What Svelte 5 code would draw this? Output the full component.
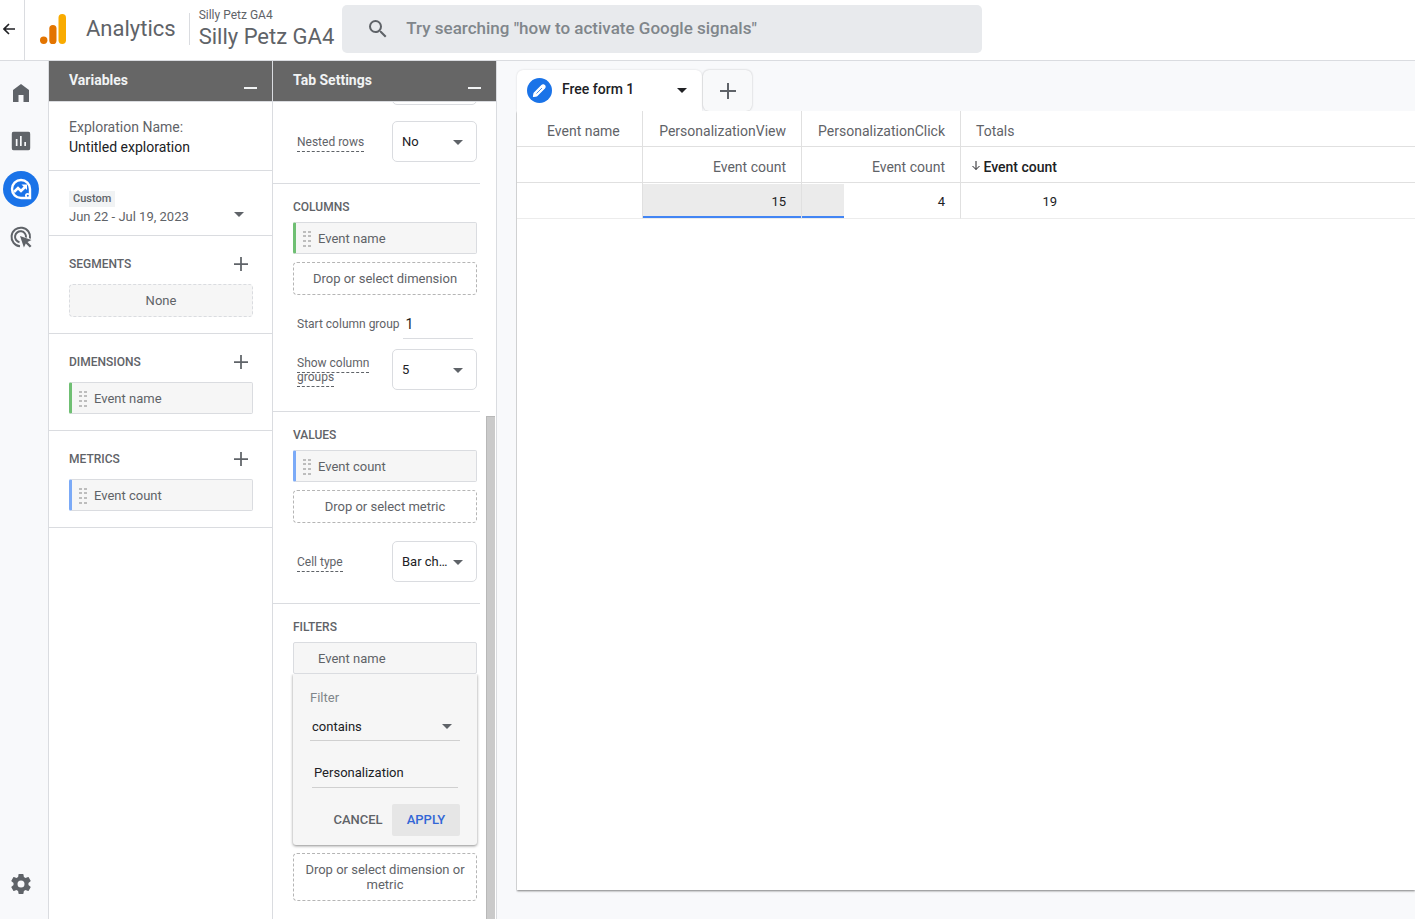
<script>
    let groupStart = $state("1");
    let filterText = $state("Personalization");

    const sections = [
        { title: "Dimensions", item: "Event name", kind: "dimension" },
        { title: "Metrics", item: "Event count", kind: "metric" },
    ];

    const columns = [
        { name: "PersonalizationView", count: 15 },
        { name: "PersonalizationClick", count: 4 },
    ];
    const max = Math.max(...columns.map((c) => c.count));
    const total = columns.reduce((sum, c) => sum + c.count, 0);
</script>

{#snippet caret()}
    <svg class="caret" viewBox="0 0 10 5" aria-hidden="true">
        <path d="M0 0h10L5 5z" />
    </svg>
{/snippet}

{#snippet plus(size)}
    <svg width={size} height={size} viewBox="0 0 16 16" aria-hidden="true">
        <path d="M8 0v16M0 8h16" fill="none" stroke="currentColor" stroke-width="2" />
    </svg>
{/snippet}

{#snippet chip(label, kind)}
    <div class="chip {kind}">
        <svg class="grip" viewBox="0 0 8 16" aria-hidden="true">
            {#each [0, 4, 9, 14] as y}
                <rect x="0" {y} width="3" height="2" />
                <rect x="5" {y} width="3" height="2" />
            {/each}
        </svg>
        <span>{label}</span>
    </div>
{/snippet}

<div class="app">
    <header class="topbar">
        <button class="back" aria-label="Back">
            <svg width="12" height="12" viewBox="0 0 12 12" aria-hidden="true">
                <path d="M12 6H1M6 1L1 6l5 5" fill="none" stroke="currentColor" stroke-width="1.6" />
            </svg>
        </button>
        <a class="brand" href="#home">
            <svg width="26" height="30" viewBox="0 0 26 30" aria-hidden="true">
                <rect x="18.5" y="0" width="7.5" height="30" rx="3.7" fill="#f9ab00" />
                <rect x="9.3" y="11" width="7.2" height="19" rx="3.6" fill="#e37400" />
                <circle cx="3.7" cy="26.3" r="3.7" fill="#e37400" />
            </svg>
            <span>Analytics</span>
        </a>
        <div class="property">
            <span class="account">Silly Petz GA4</span>
            <span class="name">Silly Petz GA4</span>
        </div>
        <label class="search">
            <svg width="18" height="18" viewBox="3 3 18 18" aria-hidden="true">
                <path
                    d="M15.5 14h-.79l-.28-.27A6.471 6.471 0 0 0 16 9.5 6.5 6.5 0 1 0 9.5 16c1.61 0 3.09-.59 4.23-1.57l.27.28v.79l5 4.99L20.49 19l-4.99-5zm-6 0C7.01 14 5 11.99 5 9.5S7.01 5 9.5 5 14 7.01 14 9.5 11.99 14 9.5 14z"
                />
            </svg>
            <input
                type="search"
                aria-label="Search"
                placeholder={'Try searching "how to activate Google signals"'}
            />
        </label>
    </header>

    <div class="body">
        <nav class="rail">
            <a href="#home" aria-label="Home">
                <svg width="16" height="18" viewBox="0 0 16 18" aria-hidden="true">
                    <path d="M8 0L0 6v12h5.5v-7h5v7H16V6z" />
                </svg>
            </a>
            <a href="#reports" aria-label="Reports">
                <svg width="24" height="24" viewBox="0 0 24 24" aria-hidden="true">
                    <path
                        d="M19 2.8H5A2 2 0 0 0 2.8 5v14A2 2 0 0 0 5 21.2h14a2 2 0 0 0 2.2-2.2V5A2 2 0 0 0 19 2.8zM8.5 17h-1.7v-7h1.7zm4.2 0h-1.7V7h1.7zm4.3 0h-1.7v-4H17z"
                    />
                </svg>
            </a>
            <a href="#explore" class="active" aria-label="Explore">
                <svg width="22" height="22" viewBox="0 0 22 22" aria-hidden="true">
                    <path
                        d="M11 2a9 9 0 1 0 0 18h9v-9a9 9 0 0 0-9-9z"
                        fill="none"
                        stroke="currentColor"
                        stroke-width="2.4"
                    />
                    <path d="M4 14l4-4 3 3 5-5" fill="none" stroke="currentColor" stroke-width="2.6" />
                    <path d="M11.5 6.5H17V12z" />
                    <circle cx="17.5" cy="17.5" r="2.5" />
                    <circle cx="17.8" cy="17.8" r="1" fill="#1a73e8" />
                </svg>
            </a>
            <a href="#advertising" aria-label="Advertising">
                <svg width="22" height="22" viewBox="0 0 22 22" aria-hidden="true">
                    <g fill="none" stroke="currentColor" stroke-width="2">
                        <path d="M20 12.5A9.3 9.3 0 1 0 10 20.2" />
                        <path d="M16 11.5A5.5 5.5 0 1 0 9.5 16.2" />
                    </g>
                    <path d="M10 10l11.5 4-4 1.9 4 4-1.7 1.7-4-4-1.9 3.9z" />
                </svg>
            </a>
            <a href="#admin" class="admin" aria-label="Admin">
                <svg width="24" height="24" viewBox="0 0 24 24" aria-hidden="true">
                    <path
                        d="M19.43 12.98c.04-.32.07-.64.07-.98s-.03-.66-.07-.98l2.11-1.65c.19-.15.24-.42.12-.64l-2-3.46c-.12-.22-.39-.3-.61-.22l-2.49 1c-.52-.4-1.08-.73-1.69-.98l-.38-2.65A.488.488 0 0 0 14 2h-4c-.25 0-.46.18-.49.42l-.38 2.65c-.61.25-1.17.59-1.69.98l-2.49-1c-.23-.09-.49 0-.61.22l-2 3.46c-.13.22-.07.49.12.64l2.11 1.65c-.04.32-.07.65-.07.98s.03.66.07.98l-2.11 1.65c-.19.15-.24.42-.12.64l2 3.46c.12.22.39.3.61.22l2.49-1c.52.4 1.08.73 1.69.98l.38 2.65c.03.24.24.42.49.42h4c.25 0 .46-.18.49-.42l.38-2.65c.61-.25 1.17-.59 1.69-.98l2.49 1c.23.09.49 0 .61-.22l2-3.46c.12-.22.07-.49-.12-.64zM12 15.5a3.5 3.5 0 1 1 0-7 3.5 3.5 0 0 1 0 7z"
                    />
                </svg>
            </a>
        </nav>

        <!-- Variables -->
        <section class="panel">
            <div class="panel-head">
                <h2>Variables</h2>
                <button class="minimize" aria-label="Minimize variables"></button>
            </div>
            <div class="block exploration">
                <div class="muted">Exploration Name:</div>
                <div>Untitled exploration</div>
            </div>
            <button class="block dates">
                <span class="range">
                    <span class="badge">Custom</span>
                    <span>Jun 22 - Jul 19, 2023</span>
                </span>
                {@render caret()}
            </button>
            <div class="block group">
                <div class="group-head">
                    <h3>Segments</h3>
                    <button aria-label="Add segment">{@render plus(14)}</button>
                </div>
                <div class="drop empty">None</div>
            </div>
            {#each sections as s}
                <div class="block group">
                    <div class="group-head">
                        <h3>{s.title}</h3>
                        <button aria-label="Add {s.title}">{@render plus(14)}</button>
                    </div>
                    {@render chip(s.item, s.kind)}
                </div>
            {/each}
        </section>

        <!-- Tab settings -->
        <section class="panel">
            <div class="panel-head">
                <h2>Tab Settings</h2>
                <button class="minimize" aria-label="Minimize tab settings"></button>
            </div>
            <div class="scroller">
                <div class="settings">
                    <div class="setting-group scrolled">
                        <div class="field">
                            <span></span>
                            <div class="select">
                                <select aria-label="Show rows"><option>10</option></select>
                                {@render caret()}
                            </div>
                        </div>
                        <div class="field nested">
                            <label for="nested"><span class="hint">Nested rows</span></label>
                            <div class="select">
                                <select id="nested"><option>No</option><option>Yes</option></select>
                                {@render caret()}
                            </div>
                        </div>
                    </div>

                    <div class="setting-group">
                        <h3>Columns</h3>
                        {@render chip("Event name", "dimension")}
                        <button class="drop">Drop or select dimension</button>
                        <div class="field start">
                            <label for="start">Start column group</label>
                            <input id="start" type="text" bind:value={groupStart} />
                        </div>
                        <div class="field">
                            <label for="groups"><span class="hint">Show column groups</span></label>
                            <div class="select">
                                <select id="groups"><option>5</option><option>10</option></select>
                                {@render caret()}
                            </div>
                        </div>
                    </div>

                    <div class="setting-group">
                        <h3>Values</h3>
                        {@render chip("Event count", "metric")}
                        <button class="drop">Drop or select metric</button>
                        <div class="field cell-type">
                            <label for="cell"><span class="hint">Cell type</span></label>
                            <div class="select">
                                <select id="cell"><option>Bar chart</option><option>Plain text</option></select>
                                {@render caret()}
                            </div>
                        </div>
                    </div>

                    <div class="setting-group">
                        <h3>Filters</h3>
                        <div class="chip plain"><span>Event name</span></div>
                        <form class="filter" onsubmit={(e) => e.preventDefault()}>
                            <label class="filter-label" for="match">Filter</label>
                            <div class="match">
                                <select id="match"><option>contains</option><option>exactly matches</option></select>
                                {@render caret()}
                            </div>
                            <input type="text" aria-label="Expression" bind:value={filterText} />
                            <div class="actions">
                                <button type="button">Cancel</button>
                                <button type="submit" class="apply">Apply</button>
                            </div>
                        </form>
                        <button class="drop">Drop or select dimension or metric</button>
                    </div>
                </div>
                <div class="track"><div class="thumb"></div></div>
            </div>
        </section>

        <main>
            <div class="tabs">
                <button class="tab">
                    <span class="pencil">
                        <svg width="15" height="15" viewBox="0 0 15 15" aria-hidden="true">
                            <path
                                d="M1.5 13.5l.6-3.3 7.7-7.7a1.9 1.9 0 0 1 2.7 2.7l-7.7 7.7z"
                                fill="#fff"
                                stroke="#fff"
                                stroke-width="1.2"
                                stroke-linejoin="round"
                            />
                            <path d="M4.5 10.5l5.500-5.500" stroke="#1a73e8" stroke-width="0.8" />
                        </svg>
                    </span>
                    <span class="tab-name">Free form 1</span>
                    {@render caret()}
                </button>
                <button class="tab add" aria-label="Add tab">{@render plus(16)}</button>
            </div>
            <div class="canvas">
                <table>
                    <colgroup>
                        <col class="c-name" />
                        {#each columns as c}<col class="c-value" />{/each}
                        <col class="c-total" />
                        <col />
                    </colgroup>
                    <thead>
                        <tr>
                            <th class="first">Event name</th>
                            {#each columns as c}<th class="num">{c.name}</th>{/each}
                            <th class="totals">Totals</th>
                            <th></th>
                        </tr>
                        <tr>
                            <th></th>
                            {#each columns as c}<th class="num">Event count</th>{/each}
                            <th class="num sorted">
                                <svg width="8" height="10" viewBox="0 0 8 10" aria-hidden="true">
                                    <path d="M4 0v8.5M.5 5L4 8.5 7.5 5" fill="none" stroke="currentColor" />
                                </svg>
                                Event count
                            </th>
                            <th></th>
                        </tr>
                    </thead>
                    <tbody>
                        <tr>
                            <td></td>
                            {#each columns as c}
                                <td class="num bar-cell">
                                    <div class="bar" style:width="{(c.count / max) * 100}%"></div>
                                    <span>{c.count}</span>
                                </td>
                            {/each}
                            <td class="num">{total}</td>
                            <td></td>
                        </tr>
                    </tbody>
                </table>
            </div>
        </main>
    </div>
</div>

<style>
    :global(body) {
        background: #f8f9fa;
    }

    .app {
        display: flex;
        flex-direction: column;
        height: 100vh;
        overflow: hidden;
        font-family: Roboto, "Liberation Sans", sans-serif;
        font-size: 13px;
        line-height: 20px;
        color: #202124;
    }
    .app *,
    .app *::after {
        box-sizing: border-box;
    }
    button,
    input,
    select {
        font: inherit;
        color: inherit;
        background: none;
        border: 0;
        border-radius: 0;
        padding: 0;
        margin: 0;
        outline: 0;
    }
    select {
        appearance: none;
    }
    button {
        cursor: pointer;
    }
    h2,
    h3 {
        margin: 0;
    }
    svg {
        display: block;
        flex: none;
        fill: currentColor;
    }
    .caret {
        width: 10px;
        height: 5px;
    }

    /* Top bar */
    .topbar {
        display: flex;
        align-items: center;
        flex: none;
        height: 61px;
        background: #fff;
        border-bottom: 1px solid #dadce0;
        color: #5f6368;
    }
    .back {
        display: flex;
        align-items: center;
        width: 25px;
        height: 60px;
        padding: 0 0 2px 3px;
        border-right: 1px solid #dadce0;
        color: #202124;
    }
    .brand {
        display: flex;
        align-items: center;
        gap: 20px;
        padding: 0 13px 2px 15px;
        font-size: 22px;
        color: #5f6368;
        text-decoration: none;
    }
    .property {
        display: flex;
        flex-direction: column;
        padding: 0 0 2px 10px;
        position: relative;
    }
    .property::after {
        content: "";
        position: absolute;
        left: 0;
        top: 6px;
        height: 32px;
        border-left: 1px solid #dadce0;
    }
    .account {
        font-size: 12px;
        line-height: 16px;
    }
    .name {
        font-size: 22px;
        line-height: 28px;
        white-space: nowrap;
    }
    .search {
        display: flex;
        align-items: center;
        gap: 19px;
        flex: 0 1 640px;
        height: 48px;
        margin: 0 0 2px 8px;
        padding: 0 27px;
        border-radius: 5px;
        background: #e8eaed;
    }
    .search input {
        flex: 1;
        min-width: 0;
        padding-bottom: 2px;
        font-size: 17px;
        font-weight: 500;
        appearance: none;
    }
    .search input::placeholder {
        color: #80868b;
        opacity: 1;
    }

    .body {
        display: flex;
        flex: 1;
        min-height: 0;
    }

    /* Left rail */
    .rail {
        display: flex;
        flex-direction: column;
        gap: 12px;
        flex: none;
        width: 49px;
        padding: 14px 0 17px 3px;
        background: #f8f9fb;
        border-right: 1px solid #dadce0;
        color: #5f6368;
    }
    .rail a {
        display: grid;
        place-items: center;
        width: 36px;
        height: 36px;
        border-radius: 50%;
        color: inherit;
    }
    .rail .active {
        background: #1a73e8;
        color: #fff;
    }
    .rail .admin {
        margin-top: auto;
    }

    /* Panels */
    .panel {
        display: flex;
        flex-direction: column;
        flex: none;
        width: 224px;
        background: #fff;
        border-right: 1px solid #dadce0;
    }
    .panel-head {
        display: flex;
        justify-content: space-between;
        flex: none;
        height: 41px;
        padding: 9px 15px 0 20px;
        background: #666;
        border-bottom: 1px solid #dadce0;
        color: #f1f3f4;
    }
    .panel-head h2 {
        font-size: 14px;
        font-weight: 700;
    }
    .minimize {
        width: 13px;
        height: 19px;
        border-bottom: 2px solid #f1f3f4;
    }
    .block {
        padding: 15px 19px 13px 20px;
        border-bottom: 1px solid #dadce0;
    }
    .exploration {
        font-size: 14px;
    }
    .muted {
        color: #5f6368;
    }
    .dates {
        display: flex;
        justify-content: space-between;
        align-items: flex-end;
        padding: 20px 28px 8px 20px;
        text-align: left;
        color: #5f6368;
    }
    .dates .caret {
        margin-bottom: 10px;
    }
    .range {
        display: flex;
        flex-direction: column;
        align-items: flex-start;
    }
    .badge {
        padding: 0 4px;
        background: #f1f3f4;
        font-size: 11px;
        font-weight: 500;
        line-height: 16px;
    }
    .group {
        padding: 18px 19px 16px 20px;
        color: #5f6368;
    }
    .group-head {
        display: flex;
        justify-content: space-between;
        height: 30px;
    }
    h3 {
        font-size: 12px;
        font-weight: 500;
        text-transform: uppercase;
    }
    .group-head button {
        display: grid;
        place-items: center;
        width: 24px;
        height: 20px;
    }
    .chip {
        display: flex;
        align-items: center;
        gap: 7px;
        height: 32px;
        padding: 2px 0 0 7px;
        background: #f6f6f6;
        border: 1px solid #dadce0;
        border-radius: 2px;
    }
    .chip.dimension {
        border-left: 3px solid #6fbf73;
    }
    .chip.metric {
        border-left: 3px solid #7baaf7;
    }
    .chip.plain {
        padding-left: 24px;
    }
    .grip {
        width: 8px;
        height: 16px;
        fill: #bdbdbd;
    }
    .drop {
        display: block;
        width: 100%;
        padding: 8px 10px;
        border: 1px dashed #b5b5b5;
        border-radius: 4px;
        line-height: 15px;
        text-align: center;
    }
    .empty {
        background: #f6f6f6;
        border-color: #dadce0;
    }

    /* Tab settings */
    .scroller {
        display: flex;
        flex: 1;
        min-height: 0;
        overflow: hidden;
    }
    .settings {
        flex: 1;
        min-width: 0;
        color: #5f6368;
    }
    .setting-group {
        padding: 13px 3px 21px 20px;
        margin-right: 6px;
        border-bottom: 1px solid #dadce0;
    }
    .setting-group:last-child {
        border-bottom: 0;
    }
    .setting-group.scrolled {
        margin-top: -38px;
        padding-top: 0;
    }
    .setting-group h3 {
        margin-bottom: 5px;
    }
    .setting-group .drop {
        margin-top: 8px;
    }
    .field {
        display: flex;
        align-items: center;
        justify-content: space-between;
        padding-left: 4px;
        font-size: 12px;
        line-height: 14px;
    }
    .nested {
        margin-top: 16px;
    }
    .cell-type {
        margin-top: 18px;
    }
    .start {
        height: 26px;
        margin: 18px 0 10px;
        padding-right: 4px;
        gap: 3px;
    }
    .start label {
        flex: none;
        margin-bottom: 4px;
    }
    .start input {
        flex: 1;
        min-width: 0;
        padding: 0 0 4px 3px;
        height: 26px;
        border-bottom: 1px solid #dadce0;
        font-size: 14px;
        color: #202124;
    }
    .hint {
        padding-bottom: 2px;
        border-bottom: 1px dashed #5f6368;
    }
    .select {
        position: relative;
        flex: none;
        width: 85px;
        height: 41px;
    }
    .select select {
        width: 100%;
        height: 100%;
        padding: 0 26px 0 9px;
        border: 1px solid #dadce0;
        border-radius: 5px;
        font-size: 13px;
        color: #202124;
        text-overflow: ellipsis;
    }
    .select .caret {
        position: absolute;
        right: 14px;
        top: 19px;
        pointer-events: none;
    }
    .track {
        flex: none;
        width: 10px;
        padding-top: 314px;
    }
    .thumb {
        width: 9px;
        height: 100%;
        background: #cacaca;
        border: 1px solid #b8b8b8;
        border-width: 1px 0 0 1px;
    }

    /* Filter editor */
    .filter {
        display: flex;
        flex-direction: column;
        padding: 14px 17px 9px;
        background: #f6f6f6;
        border-radius: 0 0 3px 3px;
        box-shadow: 0 1px 3px rgba(0, 0, 0, 0.45);
        clip-path: inset(0 -4px -4px);
    }
    .filter-label {
        color: #80868b;
    }
    .match {
        display: flex;
        align-items: center;
        margin: 5px 0 22px;
        height: 28px;
        padding-right: 8px;
        border-bottom: 1px solid #d0d0d0;
        position: relative;
        color: #5f6368;
    }
    .match select {
        position: absolute;
        inset: 0;
        width: 100%;
        padding-left: 2px;
        color: #202124;
    }
    .match .caret {
        margin-left: auto;
    }
    .filter input {
        height: 25px;
        margin: 0 2px 16px;
        padding: 0 2px 5px;
        border-bottom: 1px solid #d0d0d0;
        color: #202124;
    }
    .actions {
        display: flex;
        justify-content: flex-end;
    }
    .actions button {
        width: 68px;
        height: 32px;
        border-radius: 2px;
        font-weight: 500;
        text-transform: uppercase;
    }
    .actions .apply {
        background: #e6e6e6;
        color: #3367d6;
    }

    /* Canvas */
    main {
        display: flex;
        flex-direction: column;
        flex: 1;
        min-width: 0;
        padding: 9px 0 29px 20px;
        background: #f8f9fb;
    }
    .tabs {
        display: flex;
        gap: 1px;
        height: 41px;
    }
    .tab {
        display: flex;
        align-items: center;
        width: 185px;
        padding: 0 15px 0 10px;
        background: #fff;
        border-radius: 6px 6px 0 0;
        box-shadow: 0 0 2px rgba(0, 0, 0, 0.15);
        font-size: 14px;
        font-weight: 500;
        text-align: left;
    }
    .tab-name {
        flex: 1;
        padding-bottom: 3px;
    }
    .pencil {
        display: grid;
        place-items: center;
        width: 25px;
        height: 25px;
        margin-right: 10px;
        border-radius: 50%;
        background: #1a73e8;
    }
    .tab.add {
        justify-content: center;
        width: 49px;
        padding: 0;
        border-radius: 6px;
        background: #f8f9fa;
        box-shadow: 0 0 2px rgba(0, 0, 0, 0.25);
        color: #5f6368;
    }
    .canvas {
        flex: 1;
        background: #fff;
        box-shadow: 0 1px 2px rgba(0, 0, 0, 0.5);
        clip-path: inset(0 0 -4px -1px);
    }
    table {
        width: 100%;
        table-layout: fixed;
        border-collapse: separate;
        border-spacing: 0;
        font-size: 14px;
    }
    .c-name {
        width: 126px;
    }
    .c-value {
        width: 159px;
    }
    .c-total {
        width: 111px;
    }
    th,
    td {
        height: 36px;
        padding: 4px 15px 0;
        border-bottom: 1px solid #e0e0e0;
        border-right: 1px solid #e0e0e0;
        font-weight: 400;
        text-align: left;
        white-space: nowrap;
    }
    th {
        color: #5f6368;
    }
    td {
        padding-top: 2px;
        border-bottom-color: #ececec;
        font-size: 13px;
    }
    th:nth-last-child(-n + 2),
    td:nth-last-child(-n + 2) {
        border-right: 0;
    }
    .first {
        padding-left: 30px;
    }
    .num {
        text-align: right;
    }
    .sorted {
        padding-left: 0;
        font-weight: 500;
        color: #202124;
    }
    .sorted svg {
        display: inline-block;
        vertical-align: 1px;
    }
    .bar-cell {
        position: relative;
    }
    .bar-cell span {
        position: relative;
    }
    .bar {
        position: absolute;
        left: 0;
        top: 1px;
        bottom: 0;
        background: #ebebeb;
        border-bottom: 2px solid #4285f4;
    }
</style>
